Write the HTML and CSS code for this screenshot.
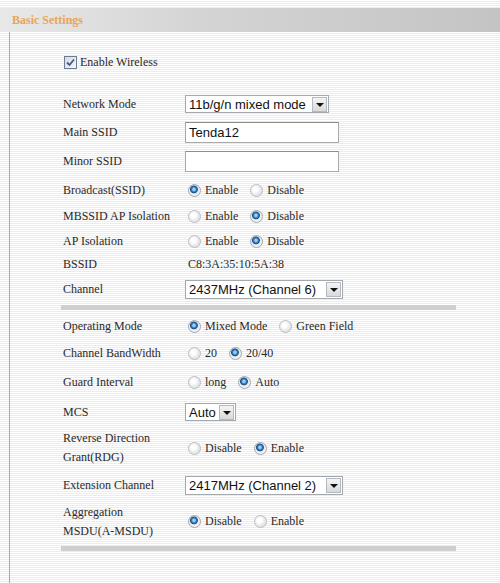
FILE: index.html
```html
<!DOCTYPE html>
<html>
<head>
<meta charset="utf-8">
<link rel="stylesheet" href="styles.css">
</head>
<body>
<div class="header">Basic Settings</div>
<div class="panel">
  <div class="enable">
    <span class="check"><svg width="9" height="9" viewBox="0 0 9 9"><path d="M1 4.5 L3.5 7 L8 1.5" fill="none" stroke="#3f5a8c" stroke-width="1.8"/></svg></span>
    <span>Enable Wireless</span>
  </div>
  <div class="form">
    <div class="row h28"><div class="lbl">Network Mode</div><div class="ctl"><span class="select w144"><span class="val">11b/g/n mixed mode</span><span class="arrow"></span></span></div></div>
    <div class="row h29"><div class="lbl">Main SSID</div><div class="ctl"><span class="input">Tenda12</span></div></div>
    <div class="row h29"><div class="lbl">Minor SSID</div><div class="ctl"><span class="input"></span></div></div>
    <div class="row h28"><div class="lbl">Broadcast(SSID)</div><div class="ctl"><span class="radio on"></span><span class="opt">Enable</span><span class="radio"></span><span class="opt">Disable</span></div></div>
    <div class="row h24"><div class="lbl">MBSSID AP Isolation</div><div class="ctl"><span class="radio"></span><span class="opt">Enable</span><span class="radio on"></span><span class="opt">Disable</span></div></div>
    <div class="row h26"><div class="lbl">AP Isolation</div><div class="ctl"><span class="radio"></span><span class="opt">Enable</span><span class="radio on"></span><span class="opt">Disable</span></div></div>
    <div class="row h20"><div class="lbl">BSSID</div><div class="ctl"><span class="plain">C8:3A:35:10:5A:38</span></div></div>
    <div class="row h30"><div class="lbl">Channel</div><div class="ctl"><span class="select w158 tall"><span class="val">2437MHz (Channel 6)</span><span class="arrow"></span></span></div></div>
    <div class="sep"></div>
    <div class="row h32"><div class="lbl">Operating Mode</div><div class="ctl"><span class="radio on"></span><span class="opt">Mixed Mode</span><span class="radio"></span><span class="opt">Green Field</span></div></div>
    <div class="row h22"><div class="lbl">Channel BandWidth</div><div class="ctl"><span class="radio"></span><span class="opt">20</span><span class="radio on"></span><span class="opt">20/40</span></div></div>
    <div class="row h36"><div class="lbl">Guard Interval</div><div class="ctl"><span class="radio"></span><span class="opt">long</span><span class="radio on"></span><span class="opt">Auto</span></div></div>
    <div class="row h24"><div class="lbl">MCS</div><div class="ctl"><span class="select w51"><span class="val">Auto</span><span class="arrow"></span></span></div></div>
    <div class="row h48"><div class="lbl two">Reverse Direction<br>Grant(RDG)</div><div class="ctl"><span class="radio"></span><span class="opt">Disable</span><span class="radio on"></span><span class="opt">Enable</span></div></div>
    <div class="row h26"><div class="lbl">Extension Channel</div><div class="ctl"><span class="select w158 tall"><span class="val">2417MHz (Channel 2)</span><span class="arrow"></span></span></div></div>
    <div class="row h47"><div class="lbl two">Aggregation<br>MSDU(A-MSDU)</div><div class="ctl"><span class="radio on"></span><span class="opt">Disable</span><span class="radio"></span><span class="opt">Enable</span></div></div>
    <div class="sep"></div>
  </div>
</div>
</body>
</html>
```
FILE: styles.css
```css
html, body {
  margin: 0;
  padding: 0;
}
body {
  width: 500px;
  height: 583px;
  overflow: hidden;
  font-family: "Liberation Serif", "Times New Roman", serif;
  font-size: 12px;
  color: #2a2a2a;
  background: repeating-linear-gradient(to bottom, #ffffff 0 1px, #ececec 1px 2px);
}
.header {
  margin-top: 8px;
  height: 24px;
  line-height: 24px;
  padding-left: 12px;
  font-weight: bold;
  color: #e9a557;
  background: linear-gradient(to right, #e8e8e8 0%, #d4d4d4 40%, #c4c4c4 100%);
}
.panel {
  margin-left: 9px;
  border-left: 1px solid #a8a8a8;
  height: 551px;
  padding-left: 51px;
}
.enable {
  display: flex;
  align-items: center;
  padding-top: 23px;
  height: 14px;
  padding-left: 3px;
  margin-bottom: 21px;
}
.check {
  width: 11px;
  height: 11px;
  border: 1px solid #6a7b94;
  background: linear-gradient(135deg, #d8d8e0, #f6f6f8);
  display: flex;
  align-items: center;
  justify-content: center;
  margin-right: 3px;
}
.form {
  width: 395px;
}
.row {
  display: flex;
  align-items: center;
}
.h20 { height: 20px; }
.h22 { height: 22px; }
.h24 { height: 24px; }
.h26 { height: 26px; }
.h28 { height: 28px; }
.h29 { height: 29px; }
.h30 { height: 30px; }
.h32 { height: 32px; }
.h36 { height: 36px; }
.h47 { height: 47px; }
.h48 { height: 48px; }
.lbl {
  width: 122px;
  padding-left: 2px;
  flex: none;
}
.lbl.two {
  line-height: 19px;
}
.ctl {
  display: flex;
  align-items: center;
}
.plain {
  padding-left: 3px;
}
.select {
  display: flex;
  align-items: center;
  height: 16px;
  border: 1px solid #a4a9b0;
  background: #fff;
  font-family: "Liberation Sans", Arial, sans-serif;
  font-size: 13px;
  color: #111;
  box-sizing: content-box;
}
.select.tall { height: 17px; }
.w144 { width: 142px; }
.w158 { width: 156px; }
.w51 { width: 49px; }
.val {
  flex: 1;
  padding-left: 3px;
  white-space: nowrap;
  overflow: hidden;
}
.arrow {
  width: 13px;
  height: 13px;
  margin-right: 1px;
  border: 1px solid #b5bac2;
  background: linear-gradient(to bottom, #f4f4f4, #d9d9d9);
  position: relative;
  flex: none;
}
.arrow::after {
  content: "";
  position: absolute;
  left: 3px;
  top: 5px;
  border-left: 4px solid transparent;
  border-right: 4px solid transparent;
  border-top: 4px solid #111;
  width: 0;
  height: 0;
}
.input {
  display: block;
  width: 149px;
  height: 19px;
  line-height: 19px;
  border: 1px solid #a9a9a9;
  border-top-color: #8c8c8c;
  background: #fff;
  padding-left: 3px;
  font-family: "Liberation Sans", Arial, sans-serif;
  font-size: 13px;
  color: #111;
}
.radio {
  width: 11px;
  height: 11px;
  border-radius: 50%;
  border: 1px solid #b9bdc2;
  background: radial-gradient(circle at 40% 40%, #ffffff 0 2px, #e4e4e4 6px);
  margin-left: 3px;
  margin-right: 4px;
  flex: none;
}
.radio.on {
  border-color: #9ea7b2;
  background: radial-gradient(circle at 45% 40%, #9fd0f5 0 1px, #2d78bb 2.5px, #1a4f86 3.5px, #e8e8e8 4.3px, #f2f2f2 6px);
}
.opt {
  margin-right: 9px;
}
.sep {
  height: 5px;
  background: #cfcfcf;
  margin-top: 1px;
}
```
